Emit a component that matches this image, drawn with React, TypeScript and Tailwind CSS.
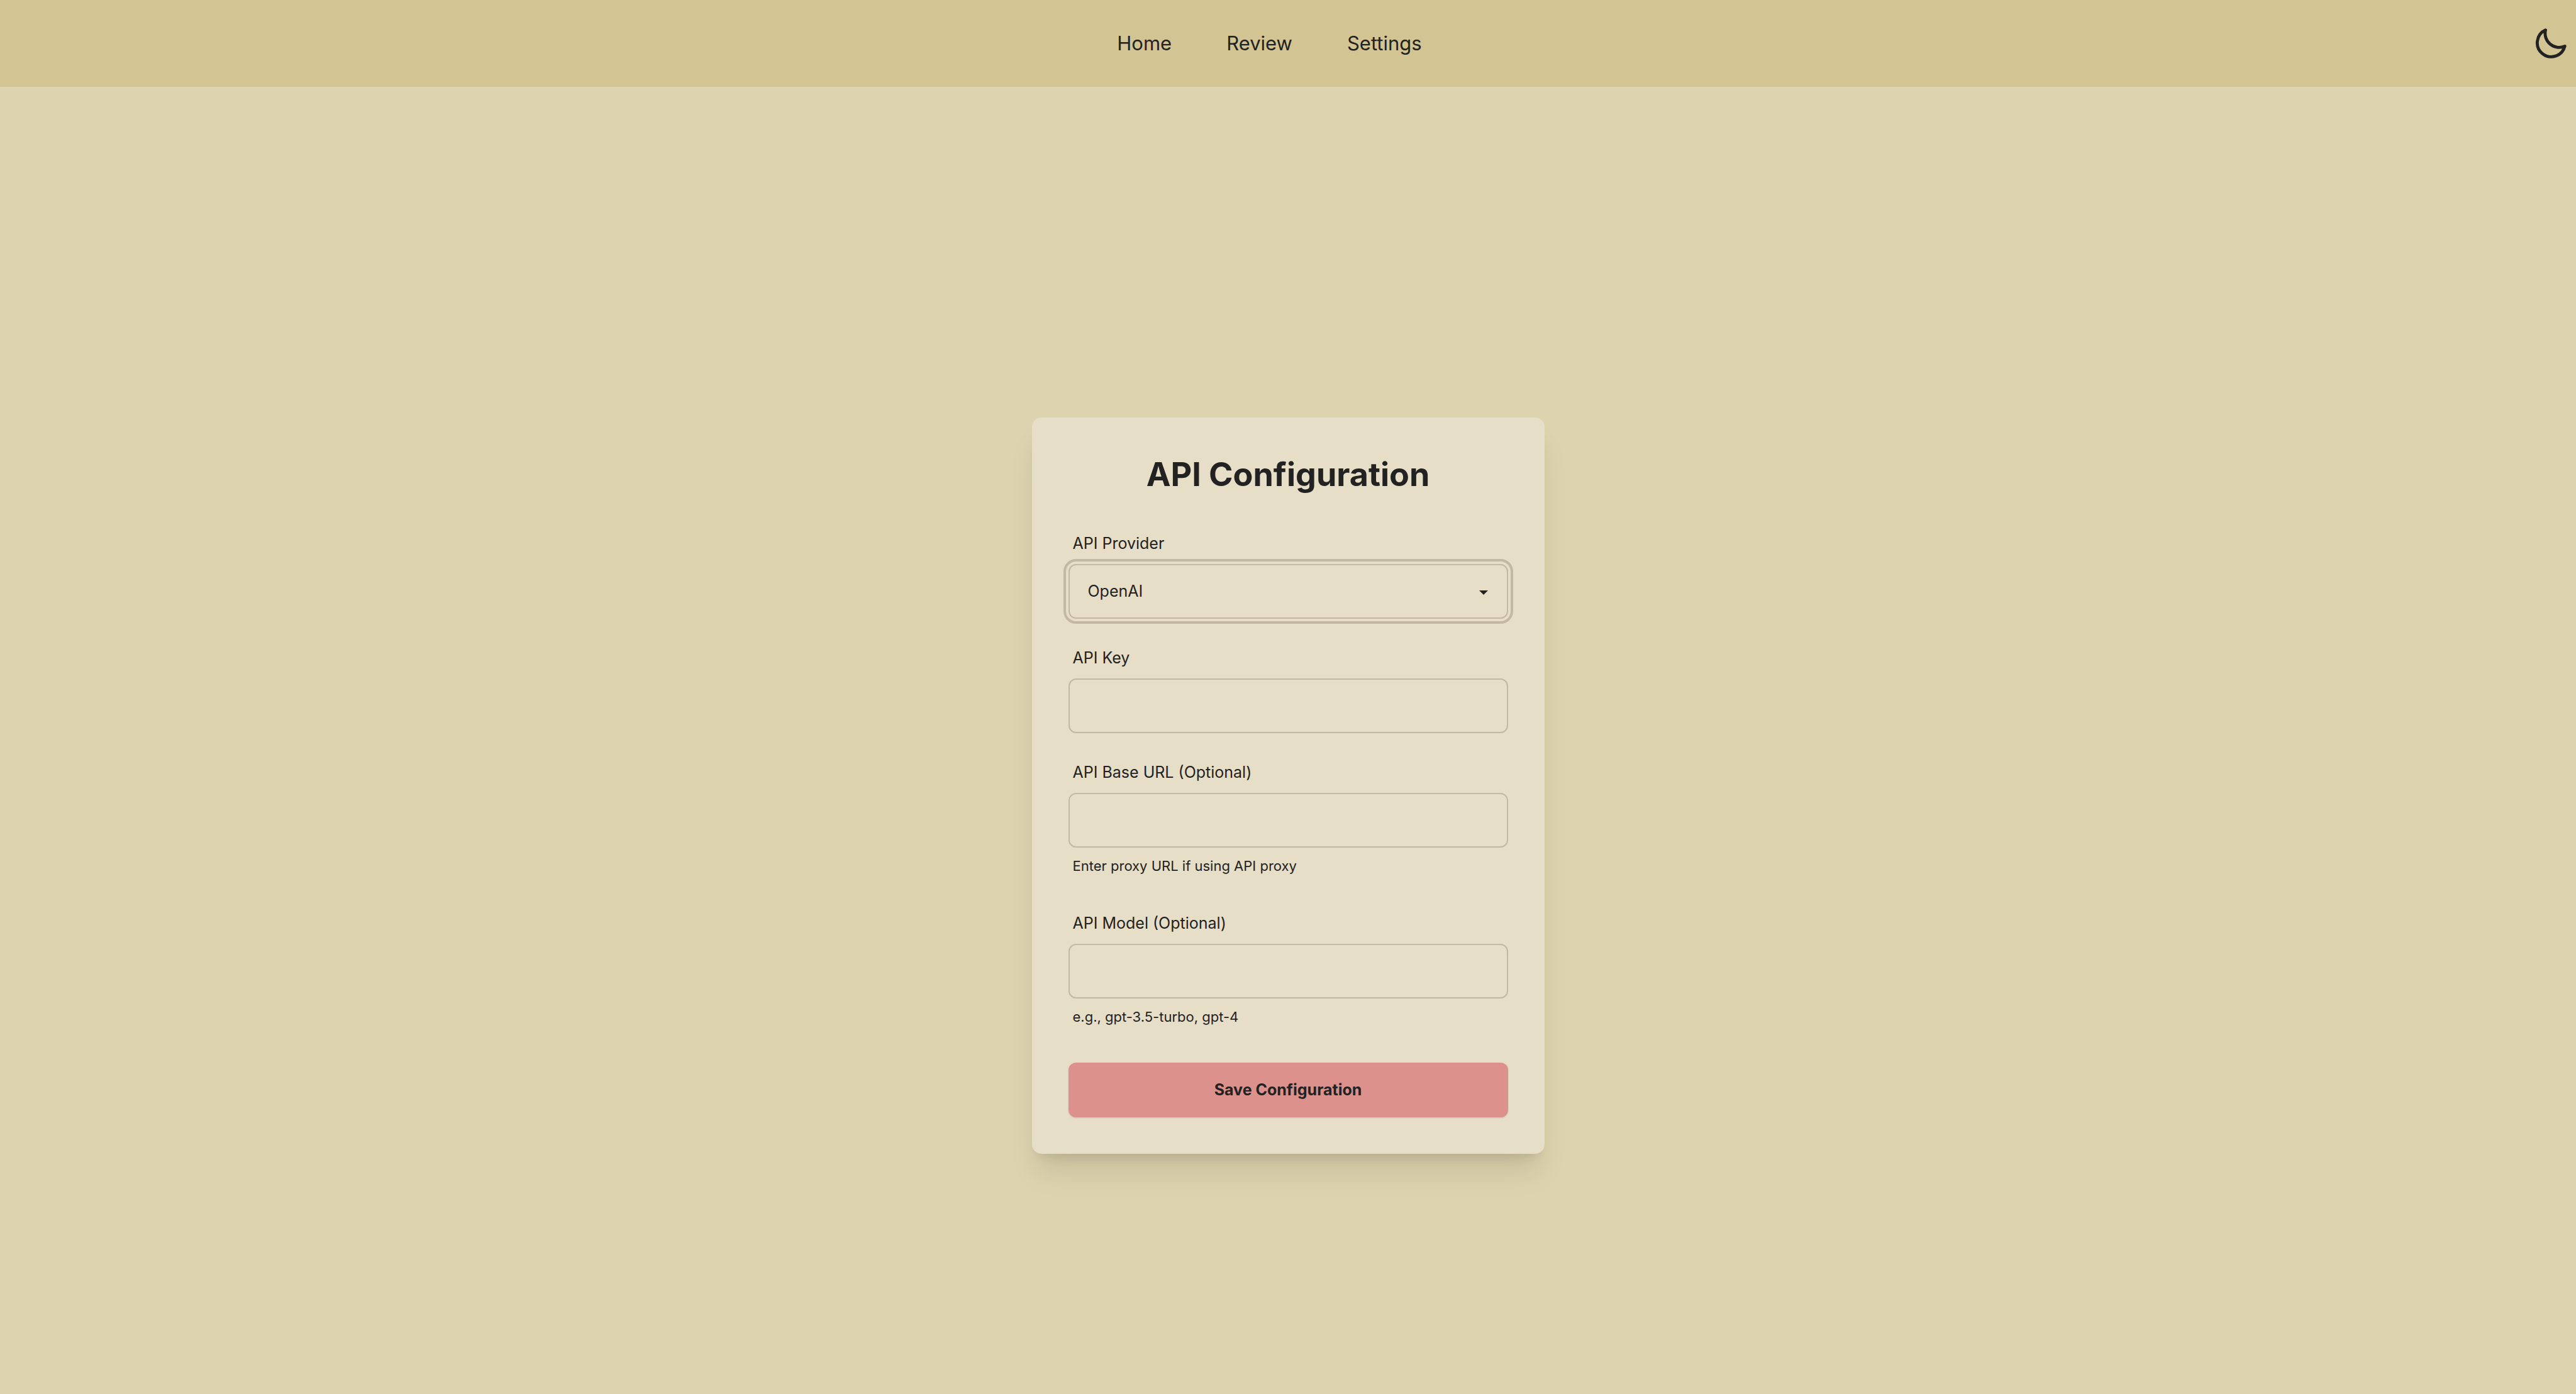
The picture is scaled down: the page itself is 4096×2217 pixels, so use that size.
const field =
  'h-[87px] w-full rounded-[12px] border-2 border-[#c2b8a3] bg-transparent px-[29px] text-[25px] text-[#222] outline-[#c2b8a3] focus:outline-4 focus:outline-offset-4';

function TextField({ id, label, hint, type = 'text' }: { id: string; label: string; hint?: string; type?: string }) {
  return (
    <div className="flex flex-col">
      <label htmlFor={id} className="px-[7px] text-[25px] leading-[66px]">
        {label}
      </label>
      <input id={id} type={type} className={field} />
      {hint && <p className="px-[7px] text-[22px] leading-[58px]">{hint}</p>}
    </div>
  );
}

export default function App() {
  return (
    <div className="flex min-h-screen flex-col bg-[#ddd3ae] font-[Inter,sans-serif] text-[#222]">
      <header className="flex h-[138px] items-center bg-[#d2c493] pr-[11px] pl-[10px]">
        <nav className="flex flex-1 justify-center gap-[87px] text-[31px]">
          <a href="#home">Home</a>
          <a href="#review">Review</a>
          <a href="#settings">Settings</a>
        </nav>
        <button type="button" aria-label="Toggle dark mode" className="flex size-[58px] items-center justify-center">
          <svg viewBox="0 0 24 24" fill="none" stroke="currentColor" strokeWidth="2" strokeLinecap="round" strokeLinejoin="round" className="size-[58px]">
            <path d="M21.2 13.8A9.2 9.2 0 0 1 8.5 3.2A9.2 9.2 0 1 0 21.2 13.8z" />
          </svg>
        </button>
      </header>
      <main className="flex flex-1 items-center justify-center pt-[144px]">
        <section className="w-full max-w-[815px] rounded-[15px] bg-[#e6dec6] p-[58px] shadow-[0_36px_46px_-9px_rgb(0_0_0/0.1),0_15px_18px_-11px_rgb(0_0_0/0.1)]">
          <h1 className="mb-[43px] text-center text-[52px] leading-[66px] font-bold">API Configuration</h1>
          <form className="flex flex-col gap-[29px]">
            <div className="flex flex-col">
              <label htmlFor="provider" className="px-[7px] text-[25px] leading-[66px]">
                API Provider
              </label>
              <div className="relative">
                <select
                  id="provider"
                  className="block h-[87px] w-full appearance-none rounded-[12px] border-2 border-[#c2b8a3] bg-transparent px-[29px] text-[25px] outline-4 outline-offset-4 outline-[#c2b8a3]"
                >
                  <option>OpenAI</option>
                </select>
                <svg viewBox="0 0 14 7" fill="currentColor" className="pointer-events-none absolute top-[42px] right-[32px] h-[7px] w-[14px]">
                  <path d="M0 0h14L7 7z" />
                </svg>
              </div>
            </div>
            <TextField id="key" label="API Key" type="password" />
            <TextField id="base-url" label="API Base URL (Optional)" hint="Enter proxy URL if using API proxy" />
            <TextField id="model" label="API Model (Optional)" hint="e.g., gpt-3.5-turbo, gpt-4" />
            <button type="submit" className="mt-[15px] h-[87px] rounded-[12px] bg-[#dd918c] text-[25px] font-bold shadow-sm">
              Save Configuration
            </button>
          </form>
        </section>
      </main>
    </div>
  );
}
